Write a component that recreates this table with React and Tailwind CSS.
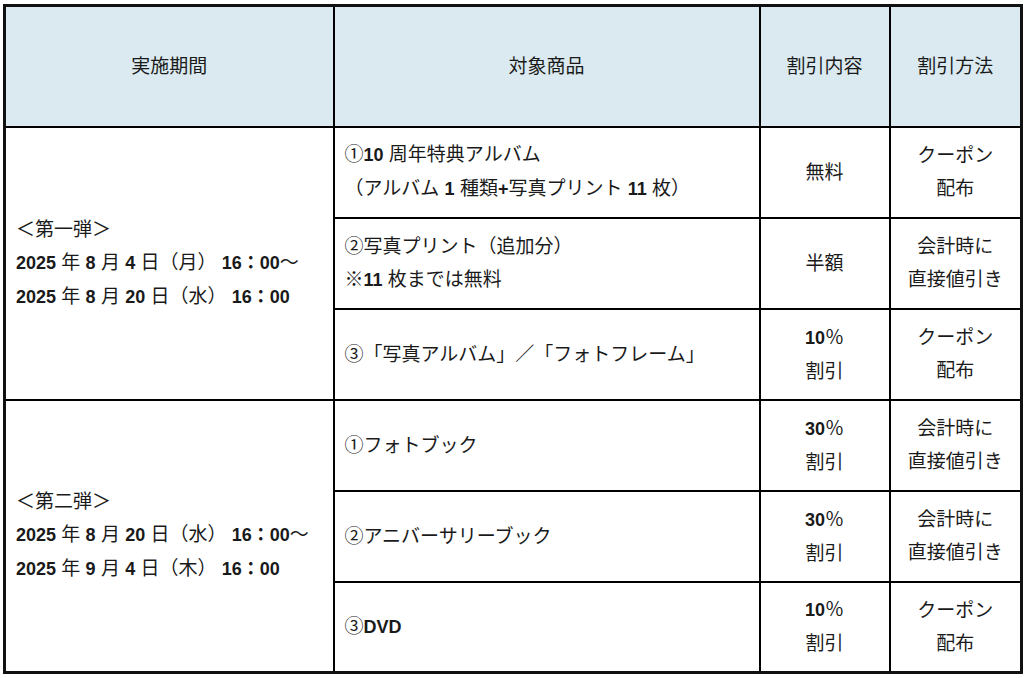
import React from 'react';

const B = ({ children }) => <span className="font-bold text-[18px]">{children}</span>;

const cell = 'border-2 border-black align-middle';

function Period({ label, from, to }) {
  return (
    <td rowSpan={3} className={`${cell} pl-[10px] text-left`}>
      <div>{label}</div>
      <div>{from}</div>
      <div>{to}</div>
    </td>
  );
}

function Row({ product, discount, method, period, h = 'h-[91px]' }) {
  return (
    <tr className={h}>
      {period}
      <td className={`${cell} pl-[10px] text-left`}>{product}</td>
      <td className={`${cell} text-center`}>{discount}</td>
      <td className={`${cell} text-center`}>{method}</td>
    </tr>
  );
}

const coupon = (
  <>
    <div>クーポン</div>
    <div>配布</div>
  </>
);

const direct = (
  <>
    <div>会計時に</div>
    <div>直接値引き</div>
  </>
);

const pct = (n) => (
  <>
    <div>
      <B>{n}</B>％
    </div>
    <div>割引</div>
  </>
);

export default function App() {
  return (
    <div className="min-h-screen bg-white pl-[3px] pt-[4px]">
      <table
        className="table-fixed border-collapse border-[3px] border-[#111] w-[1017px] text-[19px] leading-[33px] text-[#1a1a1a]"
        style={{ fontFamily: '"Liberation Sans", "Noto Sans CJK JP", sans-serif' }}
      >
        <colgroup>
          <col className="w-[329px]" />
          <col className="w-[426px]" />
          <col className="w-[130px]" />
          <col className="w-[132px]" />
        </colgroup>
        <thead>
          <tr className="h-[121px] bg-[#daeaf0]">
            <th className={`${cell} font-normal`}>実施期間</th>
            <th className={`${cell} font-normal`}>対象商品</th>
            <th className={`${cell} font-normal`}>割引内容</th>
            <th className={`${cell} font-normal`}>割引方法</th>
          </tr>
        </thead>
        <tbody>
          <Row
            period={
              <Period
                label="＜第一弾＞"
                from={
                  <>
                    <B>2025</B> 年 <B>8</B> 月 <B>4</B> 日（月） <B>16：00</B>～
                  </>
                }
                to={
                  <>
                    <B>2025</B> 年 <B>8</B> 月 <B>20</B> 日（水） <B>16：00</B>
                  </>
                }
              />
            }
            product={
              <>
                <div>
                  ①<B>10</B> 周年特典アルバム
                </div>
                <div>
                  （アルバム <B>1</B> 種類<B>+</B>写真プリント <B>11</B> 枚）
                </div>
              </>
            }
            discount="無料"
            method={coupon}
          />
          <Row
            product={
              <>
                <div>②写真プリント（追加分）</div>
                <div>
                  ※<B>11</B> 枚までは無料
                </div>
              </>
            }
            discount="半額"
            method={direct}
          />
          <Row
            product="③「写真アルバム」／「フォトフレーム」"
            discount={pct('10')}
            method={coupon}
          />
          <Row
            period={
              <Period
                label="＜第二弾＞"
                from={
                  <>
                    <B>2025</B> 年 <B>8</B> 月 <B>20</B> 日（水） <B>16：00</B>～
                  </>
                }
                to={
                  <>
                    <B>2025</B> 年 <B>9</B> 月 <B>4</B> 日（木） <B>16：00</B>
                  </>
                }
              />
            }
            product="①フォトブック"
            discount={pct('30')}
            method={direct}
          />
          <Row product="②アニバーサリーブック" discount={pct('30')} method={direct} />
          <Row
            product={
              <>
                ③<B>DVD</B>
              </>
            }
            discount={pct('10')}
            method={coupon}
          />
        </tbody>
      </table>
    </div>
  );
}
